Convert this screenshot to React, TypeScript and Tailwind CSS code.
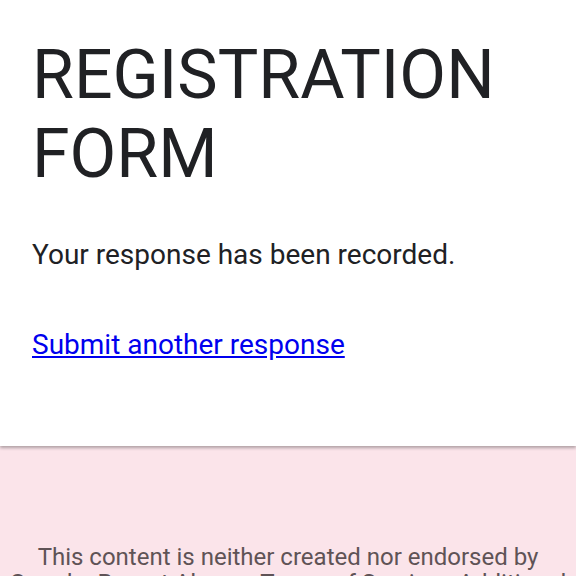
export default function App() {
  return (
    <div className="h-[576px] overflow-hidden bg-[#fbe4ea] font-['Roboto',sans-serif]">
      <div className="relative bg-white px-8 pt-[36px] pb-[83px] shadow-[0_2px_3px_rgba(0,0,0,0.3)]">
        <h1 className="text-[68px] leading-[79px] font-normal text-[#202124]">REGISTRATION FORM</h1>
        <p className="mt-[43px] text-[28px] leading-[36px] text-[#202124]">Your response has been recorded.</p>
        <a href="#" className="mt-[54px] block text-[28px] leading-[36px] text-[#0000ee] underline">
          Submit another response
        </a>
      </div>
      <div className="px-2 pt-[98px] text-center text-[24px] leading-[26px] text-[#5f5356]">
        This content is neither created nor endorsed by Google. Report Abuse - Terms of Service - Additional Terms
      </div>
    </div>
  )
}
